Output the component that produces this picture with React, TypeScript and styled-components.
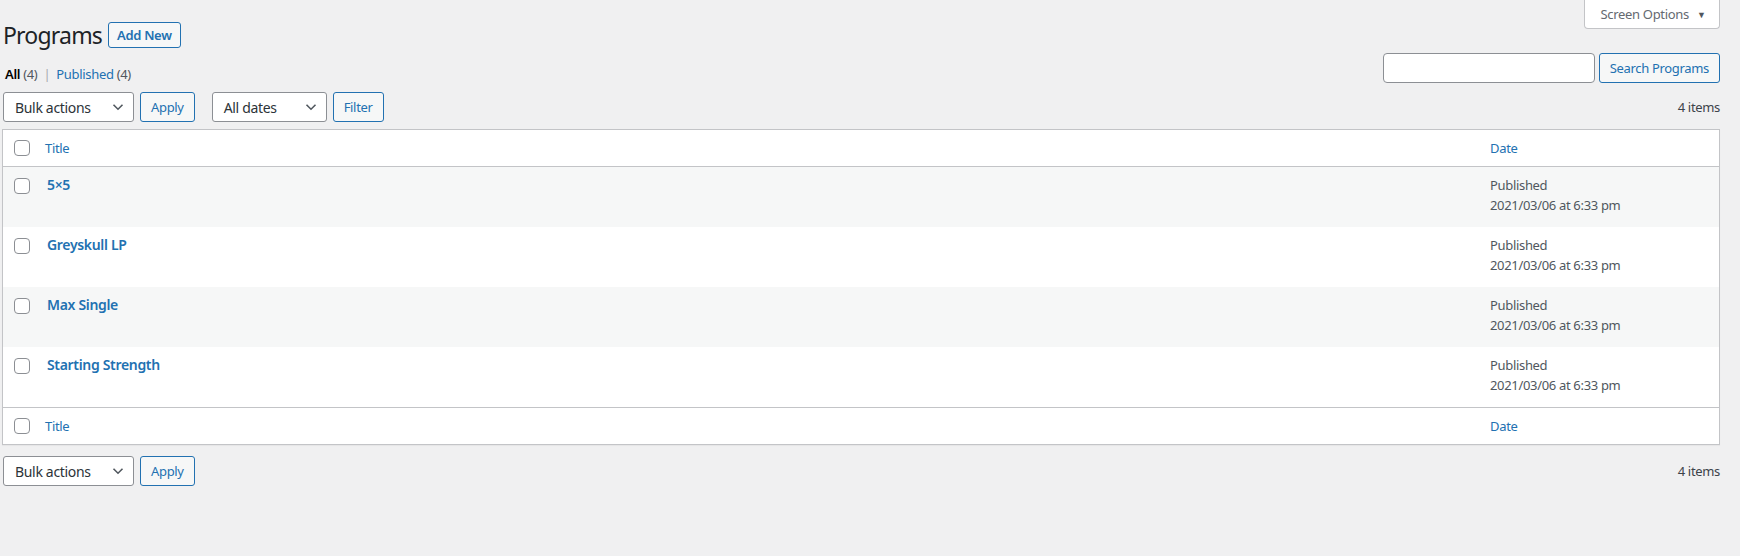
import styled, { createGlobalStyle } from "styled-components";

const programs = ["5×5", "Greyskull LP", "Max Single", "Starting Strength"];

const GlobalStyle = createGlobalStyle`
  body {
    margin: 0;
    background: #f0f0f1;
    font-family: "Noto Sans", "Open Sans", sans-serif;
    font-size: 13px;
    letter-spacing: -0.025em;
    color: #3c434a;
  }
`;

function Chevron() {
  return (
    <svg width="12" height="8" viewBox="0 0 12 8">
      <path d="M1.5 1.8 L6 6.2 L10.5 1.8" fill="none" stroke="#50575e" strokeWidth="1.6" />
    </svg>
  );
}

function Select({ label, width }: { label: string; width: number }) {
  return (
    <SelectBox style={{ width }}>
      <span>{label}</span>
      <Chevron />
    </SelectBox>
  );
}

function BulkNav({ dates }: { dates?: boolean }) {
  return (
    <TableNav>
      <Actions>
        <Select label="Bulk actions" width={131} />
        <Button>Apply</Button>
        {dates && (
          <FilterGroup>
            <Select label="All dates" width={115} />
            <Button>Filter</Button>
          </FilterGroup>
        )}
      </Actions>
      <Count>4 items</Count>
    </TableNav>
  );
}

function ColumnHeads() {
  return (
    <tr>
      <CheckHead>
        <Checkbox />
      </CheckHead>
      <HeadCell>
        <SortLink>Title</SortLink>
      </HeadCell>
      <DateHead>
        <SortLink>Date</SortLink>
      </DateHead>
    </tr>
  );
}

function App() {
  return (
    <Page>
      <GlobalStyle />
      <HeadRow>
        <TitleWrap>
          <Heading>Programs</Heading>
          <AddNew>Add New</AddNew>
        </TitleWrap>
        <ScreenOptions>
          Screen Options <Caret>▼</Caret>
        </ScreenOptions>
      </HeadRow>

      <FilterRow>
        <SubSub>
          <Current>All</Current> <Num>(4)</Num>
          <Sep>|</Sep>
          <Link>Published</Link> <Num>(4)</Num>
        </SubSub>
        <SearchBox>
          <SearchInput />
          <Button>Search Programs</Button>
        </SearchBox>
      </FilterRow>

      <TopNav>
        <BulkNav dates />
      </TopNav>

      <Table>
        <thead>
          <ColumnHeads />
        </thead>
        <tbody>
          {programs.map((name, i) => (
            <Row key={name} $alt={i % 2 === 0}>
              <CheckCell>
                <Checkbox />
              </CheckCell>
              <TitleCell>
                <RowTitle>{name}</RowTitle>
                <RowActions>Edit | Quick Edit | Trash</RowActions>
              </TitleCell>
              <DateCell>
                Published
                <br />
                2021/03/06 at 6:33 pm
              </DateCell>
            </Row>
          ))}
        </tbody>
        <tfoot>
          <ColumnHeads />
        </tfoot>
      </Table>

      <BottomNav>
        <BulkNav />
      </BottomNav>
    </Page>
  );
}

const Page = styled.div`
  padding: 0 20px 40px 2px;
`;

const HeadRow = styled.div`
  display: flex;
  justify-content: space-between;
  align-items: flex-start;
  height: 53px;
`;

const TitleWrap = styled.div`
  display: flex;
  align-items: center;
  gap: 6px;
  margin-top: 22px;
`;

const Heading = styled.h1`
  margin: 0 0 0 1px;
  font-size: 23px;
  font-weight: 400;
  line-height: 26px;
  letter-spacing: -0.035em;
  color: #1d2327;
`;

const AddNew = styled.button`
  height: 26px;
  padding: 0 8px;
  border: 1px solid #2271b1;
  border-radius: 3px;
  background: #f6f7f7;
  color: #2271b1;
  font-family: inherit;
  font-size: 13px;
  font-weight: 600;
  letter-spacing: inherit;
`;

const ScreenOptions = styled.div`
  display: flex;
  align-items: center;
  justify-content: center;
  gap: 8px;
  width: 136px;
  height: 29px;
  box-sizing: border-box;
  background: #fff;
  border: 1px solid #c3c4c7;
  border-top: none;
  border-radius: 0 0 4px 4px;
  color: #646970;
  font-size: 13px;
  padding-left: 2px;
`;

const Caret = styled.span`
  font-size: 9px;
  color: #50575e;
`;

const FilterRow = styled.div`
  display: flex;
  justify-content: space-between;
  align-items: flex-start;
`;

const SubSub = styled.div`
  margin: 11px 0 0 3px;
  line-height: 20px;
  font-size: 13px;
  color: #646970;
`;

const Current = styled.span`
  color: #000;
  font-weight: 600;
`;

const Num = styled.span`
  color: #50575e;
`;

const Sep = styled.span`
  margin: 0 6px;
  color: #a7aaad;
`;

const Link = styled.span`
  color: #2271b1;
`;

const SearchBox = styled.div`
  display: flex;
  gap: 4px;
`;

const SearchInput = styled.div`
  width: 212px;
  height: 30px;
  box-sizing: border-box;
  background: #fff;
  border: 1px solid #8c8f94;
  border-radius: 4px;
`;

const Button = styled.button`
  height: 30px;
  padding: 0 10px;
  border: 1px solid #2271b1;
  border-radius: 3px;
  background: #f6f7f7;
  color: #2271b1;
  font-family: inherit;
  font-size: 13px;
  letter-spacing: inherit;
  white-space: nowrap;
`;

const TopNav = styled.div`
  margin: 8px 0 7px;
`;

const BottomNav = styled.div`
  margin-top: 11px;
`;

const TableNav = styled.div`
  display: flex;
  justify-content: space-between;
  align-items: center;
  height: 30px;
  margin-left: 1px;
`;

const Actions = styled.div`
  display: flex;
  gap: 6px;
`;

const FilterGroup = styled.div`
  display: flex;
  gap: 6px;
  margin-left: 11px;
`;

const SelectBox = styled.div`
  display: flex;
  align-items: center;
  justify-content: space-between;
  height: 30px;
  box-sizing: border-box;
  padding: 0 9px 0 11px;
  background: #fff;
  border: 1px solid #8c8f94;
  border-radius: 3px;
  color: #2c3338;
  font-size: 14px;
`;

const Count = styled.div`
  color: #3c434a;
  font-size: 13px;
`;

const Table = styled.table`
  width: 100%;
  border-collapse: collapse;
  border: 1px solid #c3c4c7;
  background: #fff;
  box-shadow: 0 1px 1px rgba(0, 0, 0, 0.04);

  thead tr {
    border-bottom: 1px solid #c3c4c7;
  }
  tfoot tr {
    border-top: 1px solid #c3c4c7;
  }
`;

const CheckHead = styled.td`
  width: 23px;
  height: 36px;
  padding: 0 0 0 11px;
  vertical-align: middle;
`;

const HeadCell = styled.th`
  text-align: left;
  font-weight: 400;
  padding: 0 8px;
  vertical-align: middle;
`;

const DateHead = styled(HeadCell)`
  width: 221px;
  padding-left: 10px;
`;

const SortLink = styled.span`
  color: #2271b1;
  font-size: 13px;
  line-height: 20px;
`;

const Checkbox = styled.span`
  display: block;
  width: 16px;
  height: 16px;
  box-sizing: border-box;
  border: 1px solid #8c8f94;
  border-radius: 4px;
  background: #fff;
`;

const Row = styled.tr<{ $alt: boolean }>`
  background: ${(p) => (p.$alt ? "#f6f7f7" : "#fff")};
`;

const CheckCell = styled.th`
  padding: 11px 0 0 11px;
  vertical-align: top;
`;

const TitleCell = styled.td`
  padding: 8px 10px;
  vertical-align: top;
`;

const RowTitle = styled.strong`
  display: block;
  color: #2271b1;
  font-size: 14px;
  font-weight: 600;
  line-height: 20px;
`;

const RowActions = styled.div`
  visibility: hidden;
  padding-top: 4px;
  line-height: 20px;
`;

const DateCell = styled.td`
  padding: 8px 10px;
  vertical-align: top;
  color: #50575e;
  font-size: 13px;
  line-height: 20px;
`;

export default App;
